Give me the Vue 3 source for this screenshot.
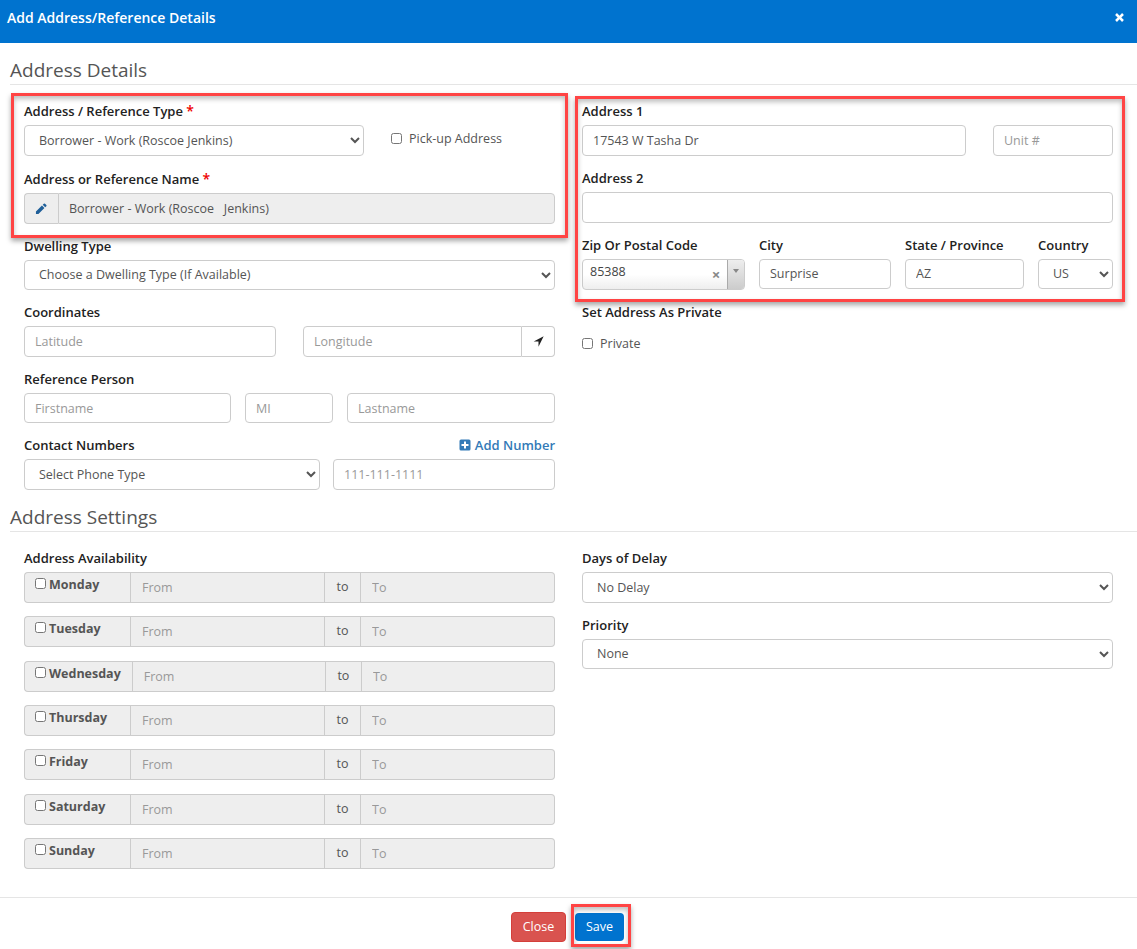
<script setup>
const days = ['Monday', 'Tuesday', 'Wednesday', 'Thursday', 'Friday', 'Saturday', 'Sunday']
</script>

<template>
  <div class="page">
    <header class="head">
      <span class="head-title">Add Address/Reference Details</span>
      <svg class="close-x" viewBox="0 0 12 12"><path d="M1.2 3.2 3.2 1.2 6 4 8.800 1.200l2 2L8 6l2.800 2.800-2 2L6 8l-2.800 2.800-2-2L4 6z" fill="#fff"/></svg>
    </header>

    <main class="body">
      <h2 class="section first">Address Details</h2>
      <div class="cols">
        <div class="col">
          <div class="field mb13">
            <label class="lbl">Address / Reference Type <em>*</em></label>
            <div class="row">
              <select class="ctl type-select"><option>Borrower - Work (Roscoe Jenkins)</option></select>
              <label class="check pickup"><input type="checkbox" />Pick-up Address</label>
            </div>
          </div>
          <div class="field">
            <label class="lbl">Address or Reference Name <em>*</em></label>
            <div class="group">
              <span class="addon pencil">
                <svg viewBox="0 0 14 14" width="12" height="12"><path d="M10.300.8a1 1 0 0 1 1.400 0l1.500 1.500a1 1 0 0 1 0 1.400l-1.300 1.300L9 2.100zM8.100 3l2.900 2.900-7 7H1.100V10z" fill="#1f5f99"/></svg>
              </span>
              <input class="ctl joined name-input" disabled value="Borrower - Work (Roscoe   Jenkins)" />
            </div>
          </div>
          <div class="field">
            <label class="lbl">Dwelling Type</label>
            <select class="ctl short raised"><option>Choose a Dwelling Type (If Available)</option></select>
          </div>
          <div class="field">
            <label class="lbl">Coordinates</label>
            <div class="row gap27">
              <input class="ctl latitude" placeholder="Latitude" />
              <div class="group grow">
                <input class="ctl joined-right" placeholder="Longitude" />
                <span class="addon arrow">
                  <svg viewBox="0 0 16 16" width="11" height="11"><path d="M15.500.5 1 8h7v7.500z" fill="#222"/></svg>
                </span>
              </div>
            </div>
          </div>
          <div class="field">
            <label class="lbl">Reference Person</label>
            <div class="row gap14">
              <input class="ctl short first-name" placeholder="Firstname" />
              <input class="ctl short mi" placeholder="MI" />
              <input class="ctl short grow" placeholder="Lastname" />
            </div>
          </div>
          <div class="field">
            <div class="lbl-row">
              <label class="lbl">Contact Numbers</label>
              <a class="add-number">
                <svg viewBox="0 0 12 12" width="12" height="12"><path fill-rule="evenodd" d="M2 .5h8A1.500 1.500 0 0 1 11.500 2v8a1.500 1.500 0 0 1-1.500 1.500H2A1.500 1.500 0 0 1 .5 10V2A1.500 1.500 0 0 1 2 .5zM5 2.500v2.500H2.500v2H5v2.500h2V7h2.500V5H7V2.500z" fill="#337ab7"/></svg>
                Add Number
              </a>
            </div>
            <div class="row gap13">
              <select class="ctl phone-type"><option>Select Phone Type</option></select>
              <input class="ctl grow" placeholder="111-111-1111" />
            </div>
          </div>
        </div>

        <div class="col">
          <div class="field">
            <label class="lbl">Address 1</label>
            <div class="row gap27">
              <input class="ctl grow" value="17543 W Tasha Dr" />
              <input class="ctl unit" placeholder="Unit #" />
            </div>
          </div>
          <div class="field">
            <label class="lbl">Address 2</label>
            <input class="ctl" />
          </div>
          <div class="field">
            <div class="row gap14">
              <div class="zip-col">
                <label class="lbl">Zip Or Postal Code</label>
                <div class="zip">
                  <span class="zip-val">85388</span>
                  <span class="zip-clear">×</span>
                  <span class="zip-arrow"></span>
                </div>
              </div>
              <div class="city-col">
                <label class="lbl">City</label>
                <input class="ctl short raised" value="Surprise" />
              </div>
              <div class="state-col">
                <label class="lbl">State / Province</label>
                <input class="ctl short raised" value="AZ" />
              </div>
              <div class="country-col">
                <label class="lbl">Country</label>
                <select class="ctl short raised"><option>US</option></select>
              </div>
            </div>
          </div>
          <div class="field">
            <label class="lbl">Set Address As Private</label>
            <label class="check private"><input type="checkbox" />Private</label>
          </div>
        </div>
      </div>

      <h2 class="section second">Address Settings</h2>
      <div class="cols">
        <div class="col">
          <label class="lbl">Address Availability</label>
          <div v-for="day in days" :key="day" class="day-row">
            <label class="day"><input type="checkbox" />{{ day }}</label>
            <input class="ctl slot" disabled placeholder="From" />
            <span class="to">to</span>
            <input class="ctl slot last" disabled placeholder="To" />
          </div>
        </div>
        <div class="col">
          <div class="field">
            <label class="lbl">Days of Delay</label>
            <select class="ctl"><option>No Delay</option></select>
          </div>
          <div class="field">
            <label class="lbl">Priority</label>
            <select class="ctl short raised"><option>None</option></select>
          </div>
        </div>
      </div>
    </main>

    <footer class="foot">
      <button class="btn red">Close</button>
      <button class="btn blue">Save</button>
    </footer>

    <div class="mark mark-a"></div>
    <div class="mark mark-b"></div>
    <div class="mark mark-c"></div>
  </div>
</template>

<style>
html, body { margin: 0; background: #fff; }
</style>

<style scoped>
.page {
  position: relative;
  width: 1137px;
  height: 949px;
  overflow: hidden;
  background: #fff;
  font-family: "Open Sans", sans-serif;
  font-size: 12.500px;
  color: #555;
}
.head {
  height: 43px;
  background: #0073cf;
  display: flex;
  justify-content: space-between;
  padding: 0 12px 9px 7px;
  box-sizing: border-box;
  align-items: center;
}
.head-title { color: #fff; font-size: 14px; font-weight: 600; }
.close-x { width: 11px; height: 11px; }
.body { padding: 0 0 0 10px; }
.section {
  margin: 0 0 16px;
  font-size: 19px;
  font-weight: 400;
  line-height: 25px;
  padding-bottom: 1px;
  color: #555;
  border-bottom: 1px solid #e5e5e5;
}
.section.first { padding-top: 15px; }
.section.second { padding-top: 3px; }
.cols {
  display: grid;
  grid-template-columns: 531px 531px;
  column-gap: 27px;
  padding-left: 14px;
}
.field { margin-bottom: 12px; }
.mb13 { margin-bottom: 13px; }
.lbl {
  display: block;
  height: 20px;
  line-height: 20px;
  margin-bottom: 4px;
  font-size: 13px;
  font-weight: 600;
  color: #222;
  white-space: nowrap;
}
.lbl em { color: #e00; font-style: normal; font-size: 14px; line-height: 0; }
.lbl-row { display: flex; justify-content: space-between; }
.add-number {
  display: flex;
  align-items: center;
  gap: 4px;
  height: 20px;
  font-size: 13px;
  color: #337ab7;
  font-weight: 600;
}
.row { display: flex; }
.gap27 { gap: 27px; }
.gap14 { gap: 14px; }
.gap13 { gap: 13px; }
.grow { flex: 1; min-width: 0; }
.ctl {
  display: block;
  width: 100%;
  height: 31px;
  box-sizing: border-box;
  border: 1px solid #ccc;
  border-radius: 4px;
  padding: 0 10px;
  background-color: #fff;
  font: inherit;
  color: #555;
  outline: none;
}
select.ctl { padding-left: 10px; padding-right: 0; }
.ctl::placeholder { color: #999; opacity: 1; }
.short { height: 30px; }
.raised { padding-bottom: 2px; }
.type-select { width: 340px; flex: none; }
.latitude { width: 252px; flex: none; }
.check {
  display: flex;
  align-items: center;
  color: #555;
}
.check input { width: 11px; height: 11px; margin: 0 7px 0 0; }
.pickup { margin-left: 27px; height: 27px; }
.private { height: 34px; }
.group { display: flex; }
.addon {
  flex: none;
  display: flex;
  align-items: center;
  justify-content: center;
  box-sizing: border-box;
  height: 31px;
  border: 1px solid #ccc;
}
.pencil {
  width: 34px;
  padding-right: 2px;
  background: #eee;
  border-right: none;
  border-radius: 4px 0 0 4px;
}
.arrow {
  width: 33px;
  background: #fff;
  border-left: none;
  border-radius: 0 4px 4px 0;
}
.joined { flex: 1; border-radius: 0 4px 4px 0; }
.joined-right { flex: 1; min-width: 0; border-radius: 4px 0 0 4px; }
.name-input { background: #eee; }
.first-name { width: 207px; flex: none; }
.mi { width: 88px; flex: none; }
.phone-type { width: 296px; flex: none; }
.unit { width: 120px; flex: none; }
.zip-col { width: 163px; flex: none; }
.city-col { width: 132px; flex: none; }
.state-col { width: 119px; flex: none; }
.country-col { width: 75px; flex: none; }
.zip {
  display: flex;
  align-items: stretch;
  height: 31px;
  box-sizing: border-box;
  border: 1px solid #ccc;
  border-radius: 4px;
  background: linear-gradient(#fff 50%, #eee);
}
.zip-val { flex: 1; padding: 1px 0 0 7px; line-height: 22px; color: #444; }
.zip-clear {
  width: 16px;
  margin-right: 3px;
  text-align: center;
  color: #888;
  font-weight: 700;
  font-size: 15px;
  line-height: 29px;
}
.zip-arrow {
  width: 16px;
  border-left: 1px solid #aaa;
  border-radius: 0 3px 3px 0;
  background: linear-gradient(#eee, #ccc);
  position: relative;
}
.zip-arrow::after {
  content: "";
  position: absolute;
  left: 5px;
  top: 9px;
  border: 3px solid transparent;
  border-top: 4px solid #888;
}
.day-row {
  display: flex;
  height: 31px;
  margin-bottom: 13.330px;
}
.day {
  flex: none;
  min-width: 106px;
  box-sizing: border-box;
  display: flex;
  align-items: flex-start;
  padding: 3px 11px 0 10px;
  line-height: 18px;
  background: #eee;
  border: 1px solid #ccc;
  border-right: none;
  border-radius: 4px 0 0 4px;
  font-weight: 700;
  color: #555;
}
.day input { width: 11px; height: 11px; margin: 2px 3px 0 0; }
.slot {
  flex: 1;
  min-width: 0;
  width: auto;
  background: #eee;
  border-radius: 0;
  padding: 0 11px;
}
.slot.last { border-radius: 0 4px 4px 0; border-left: none; }
.to {
  flex: none;
  width: 36px;
  box-sizing: border-box;
  display: flex;
  align-items: center;
  justify-content: center;
  background: #eee;
  border-top: 1px solid #ccc;
  border-bottom: 1px solid #ccc;
  border-right: 1px solid #ccc;
  padding-bottom: 2px;
}
.foot {
  position: absolute;
  left: 0;
  right: 0;
  top: 897px;
  height: 44px;
  padding-right: 2px;
  border-top: 1px solid #e5e5e5;
  box-sizing: content-box;
  display: flex;
  justify-content: center;
  align-items: flex-end;
  gap: 9px;
}
.btn {
  border: 1px solid transparent;
  border-radius: 4px;
  color: #fff;
  font: inherit;
  padding: 0 0 2px;
}
.red { width: 55px; height: 30px; background: #d9534f; border-color: #d43f3a; }
.blue { width: 49px; height: 28px; background: #0073cf; margin-bottom: 1px; }
.mark {
  position: absolute;
  box-sizing: border-box;
  border: 3px solid #ff4444;
  box-shadow: 0 3px 5px rgba(0, 0, 0, .35), inset 0 3px 5px rgba(0, 0, 0, .25);
  pointer-events: none;
}
.mark-a { left: 11px; top: 93px; width: 557px; height: 145px; }
.mark-b { left: 575px; top: 96px; width: 550px; height: 206px; }
.mark-c { left: 571px; top: 904px; width: 60px; height: 43px; }
</style>
